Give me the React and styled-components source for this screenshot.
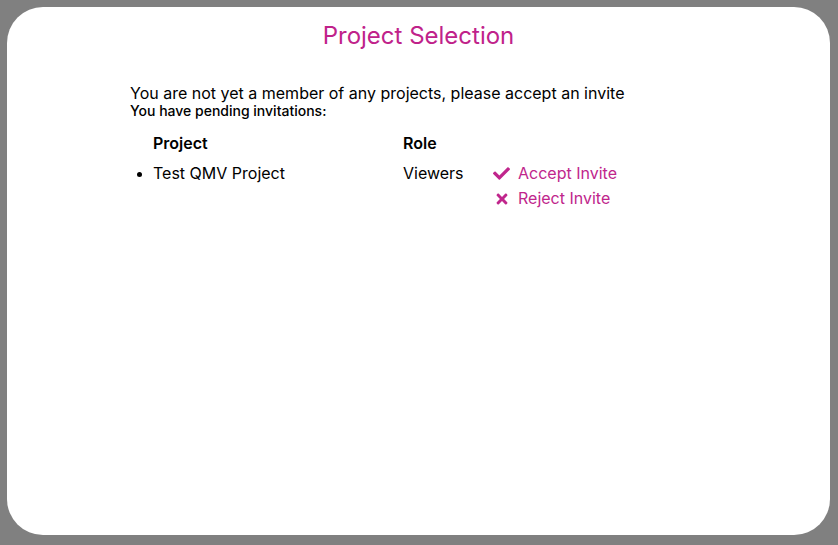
import React from 'react'
import styled, { createGlobalStyle } from 'styled-components'
import { FaCheck, FaTimes } from 'react-icons/fa'

const GlobalStyle = createGlobalStyle`
    body {
        margin: 0;
        background: #808080;
        font-family: Inter, "Noto Sans", sans-serif;
        color: #000;
    }
`

const Card = styled.div`
    margin: 7px 8px 10px 7px;
    height: 528px;
    background: #fff;
    border-radius: 36px;
    box-sizing: border-box;
    padding-top: 14px;
`

const Title = styled.h1`
    margin: 0;
    text-align: center;
    font-size: 24px;
    line-height: 30px;
    font-weight: 400;
    color: #c0228a;
`

const Content = styled.div`
    padding: 33px 0 0 123px;
`

const Intro = styled.p`
    margin: 0;
    font-size: 16px;
    line-height: 18px;
`

const Pending = styled.p`
    margin: 0;
    font-size: 14px;
    line-height: 18px;
    font-weight: 500;
`

const Table = styled.ul`
    margin: 11px 0 0;
    padding: 0 0 0 23px;
`

const Row = styled.li`
    list-style: ${p => (p.$bullet ? 'disc' : 'none')};
    font-size: 16px;
    line-height: 25px;
    font-weight: ${p => (p.$head ? 600 : 400)};
    margin-bottom: ${p => (p.$head ? '5px' : '0')};

    &::marker {
        font-size: 14px;
    }
`

const Cols = styled.div`
    display: grid;
    grid-template-columns: 250px 90px auto;
`

const Actions = styled.div`
    display: flex;
    flex-direction: column;
`

const Action = styled.a`
    display: flex;
    align-items: center;
    gap: 8px;
    color: #c0268c;
    text-decoration: none;
    cursor: pointer;
`

const Icon = styled.span`
    display: flex;
    width: 17px;
    padding-left: ${p => p.$inset || 0}px;
    box-sizing: border-box;

    svg {
        width: auto;
    }
`

const invites = [{ project: 'Test QMV Project', role: 'Viewers' }]

const App = () => {
  return (
    <>
      <GlobalStyle />
      <Card>
        <Title>Project Selection</Title>
        <Content>
          <Intro>You are not yet a member of any projects, please accept an invite</Intro>
          <Pending>You have pending invitations:</Pending>
          <Table>
            <Row $head>
              <Cols>
                <div>Project</div>
                <div>Role</div>
              </Cols>
            </Row>
            {invites.map(inv => (
              <Row $bullet key={inv.project}>
                <Cols>
                  <div>{inv.project}</div>
                  <div>{inv.role}</div>
                  <Actions>
                    <Action><Icon><FaCheck size={17} /></Icon> Accept Invite</Action>
                    <Action><Icon $inset={1}><FaTimes size={16} /></Icon> Reject Invite</Action>
                  </Actions>
                </Cols>
              </Row>
            ))}
          </Table>
        </Content>
      </Card>
    </>
  )
}

export default App
